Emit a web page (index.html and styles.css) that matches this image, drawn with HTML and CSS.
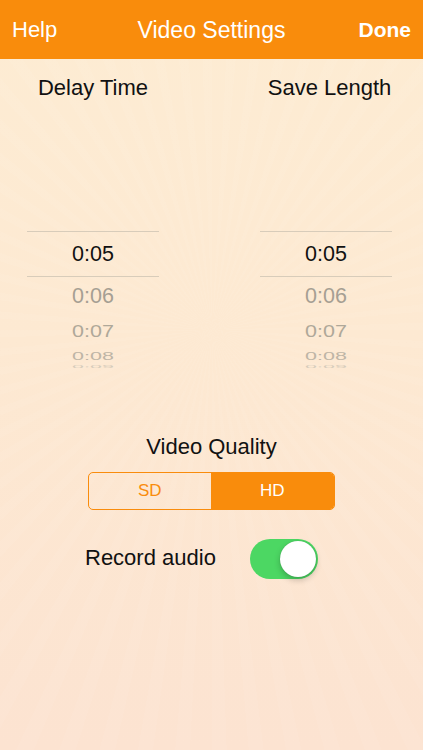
FILE: index.html
```html
<!DOCTYPE html>
<html>
<head>
<meta charset="utf-8">
<link rel="stylesheet" href="styles.css">
</head>
<body>
<div class="screen">
  <header class="nav">
    <span class="nav-btn">Help</span>
    <span class="nav-title">Video Settings</span>
    <span class="nav-btn done">Done</span>
  </header>

  <section class="pickers">
    <div class="picker">
      <div class="picker-label">Delay Time</div>
      <div class="wheel">
        <div class="row selected">0:05</div>
        <div class="row r1">0:06</div>
        <div class="row r2"><span>0:07</span></div>
        <div class="row r3"><span>0:08</span></div>
        <div class="row r4"><span>0:09</span></div>
      </div>
    </div>
    <div class="picker">
      <div class="picker-label right">Save Length</div>
      <div class="wheel">
        <div class="row selected">0:05</div>
        <div class="row r1">0:06</div>
        <div class="row r2"><span>0:07</span></div>
        <div class="row r3"><span>0:08</span></div>
        <div class="row r4"><span>0:09</span></div>
      </div>
    </div>
  </section>

  <section class="quality">
    <div class="quality-label">Video Quality</div>
    <div class="segmented">
      <div class="seg">SD</div>
      <div class="seg active">HD</div>
    </div>
  </section>

  <section class="audio">
    <span class="audio-label">Record audio</span>
    <div class="toggle"><div class="knob"></div></div>
  </section>
</div>
</body>
</html>
```

FILE: styles.css
```css
* { box-sizing: border-box; }
html, body {
  margin: 0;
  padding: 0;
}
body {
  width: 423px;
  height: 750px;
  overflow: hidden;
  font-family: "Liberation Sans", Arial, sans-serif;
  color: #111;
}
.screen {
  width: 423px;
  height: 750px;
  background:
    repeating-conic-gradient(from 0deg at 212px 330px, rgba(255,255,255,0.0) 0deg 3deg, rgba(255,255,255,0.045) 3deg 5deg),
    linear-gradient(180deg, #FDECD3 0%, #FDE9D2 45%, #FCE3D1 100%);
}
.nav {
  height: 59px;
  background: #F98C0C;
  display: flex;
  align-items: center;
  justify-content: space-between;
  padding: 0 12px 0 12px;
  color: #fff;
  position: relative;
}
.nav-btn {
  font-size: 22px;
  padding-top: 1px;
}
.done {
  font-weight: bold;
  font-size: 21px;
}
.nav-title {
  font-size: 23px;
  position: absolute;
  left: 0;
  right: 0;
  text-align: center;
  padding-top: 1px;
  pointer-events: none;
}
.pickers {
  display: flex;
  justify-content: space-between;
  padding: 0 31px 0 27px;
}
.picker {
  width: 132px;
  display: flex;
  flex-direction: column;
  align-items: center;
}
.picker-label {
  margin-top: 16px;
  height: 26px;
  line-height: 26px;
  font-size: 22px;
  white-space: nowrap;
}
.picker-label.right {
  margin-left: 7px;
}
.wheel {
  margin-top: 130px;
  width: 132px;
  display: flex;
  flex-direction: column;
  align-items: center;
}
.row {
  width: 100%;
  text-align: center;
  font-size: 21.5px;
  white-space: nowrap;
}
.row span { display: inline-block; }
.selected {
  height: 46px;
  line-height: 44px;
  border-top: 1px solid #D8CCBA;
  border-bottom: 1px solid #D8CCBA;
  color: #111;
}
.r1 {
  height: 37px;
  line-height: 38px;
  color: #A69F93;
}
.r2 {
  height: 35px;
  line-height: 35px;
  color: #AFA899;
}
.r2 span { transform: scaleY(0.78); }
.r3 {
  height: 14px;
  line-height: 14px;
  color: #BEB5A6;
}
.r3 span { transform: scaleY(0.5); }
.r4 {
  height: 8px;
  line-height: 8px;
  color: #D6CCBB;
}
.r4 span { transform: scaleY(0.14); }

.quality {
  display: flex;
  flex-direction: column;
  align-items: center;
  margin-top: 63px;
}
.quality-label {
  font-size: 22px;
  height: 26px;
  line-height: 26px;
}
.segmented {
  margin-top: 12px;
  margin-left: -1px;
  width: 247px;
  height: 38px;
  display: flex;
  border: 1.5px solid #F98C0C;
  border-radius: 5px;
  overflow: hidden;
}
.seg {
  flex: 1;
  display: flex;
  align-items: center;
  justify-content: center;
  font-size: 17px;
  color: #F98C0C;
}
.seg.active {
  background: #F98C0C;
  color: #fff;
}
.audio {
  display: flex;
  align-items: center;
  padding-left: 85px;
  margin-top: 29px;
}
.audio-label {
  font-size: 22px;
  width: 165px;
  margin-top: -3px;
  white-space: nowrap;
}
.toggle {
  width: 68px;
  height: 40px;
  border-radius: 20px;
  background: #4CD763;
  position: relative;
}
.knob {
  position: absolute;
  right: 2px;
  top: 2px;
  width: 36px;
  height: 36px;
  border-radius: 50%;
  background: #fff;
  box-shadow: 0 3px 6px rgba(0,0,0,0.22), 0 0 1px rgba(0,0,0,0.25);
}
```
